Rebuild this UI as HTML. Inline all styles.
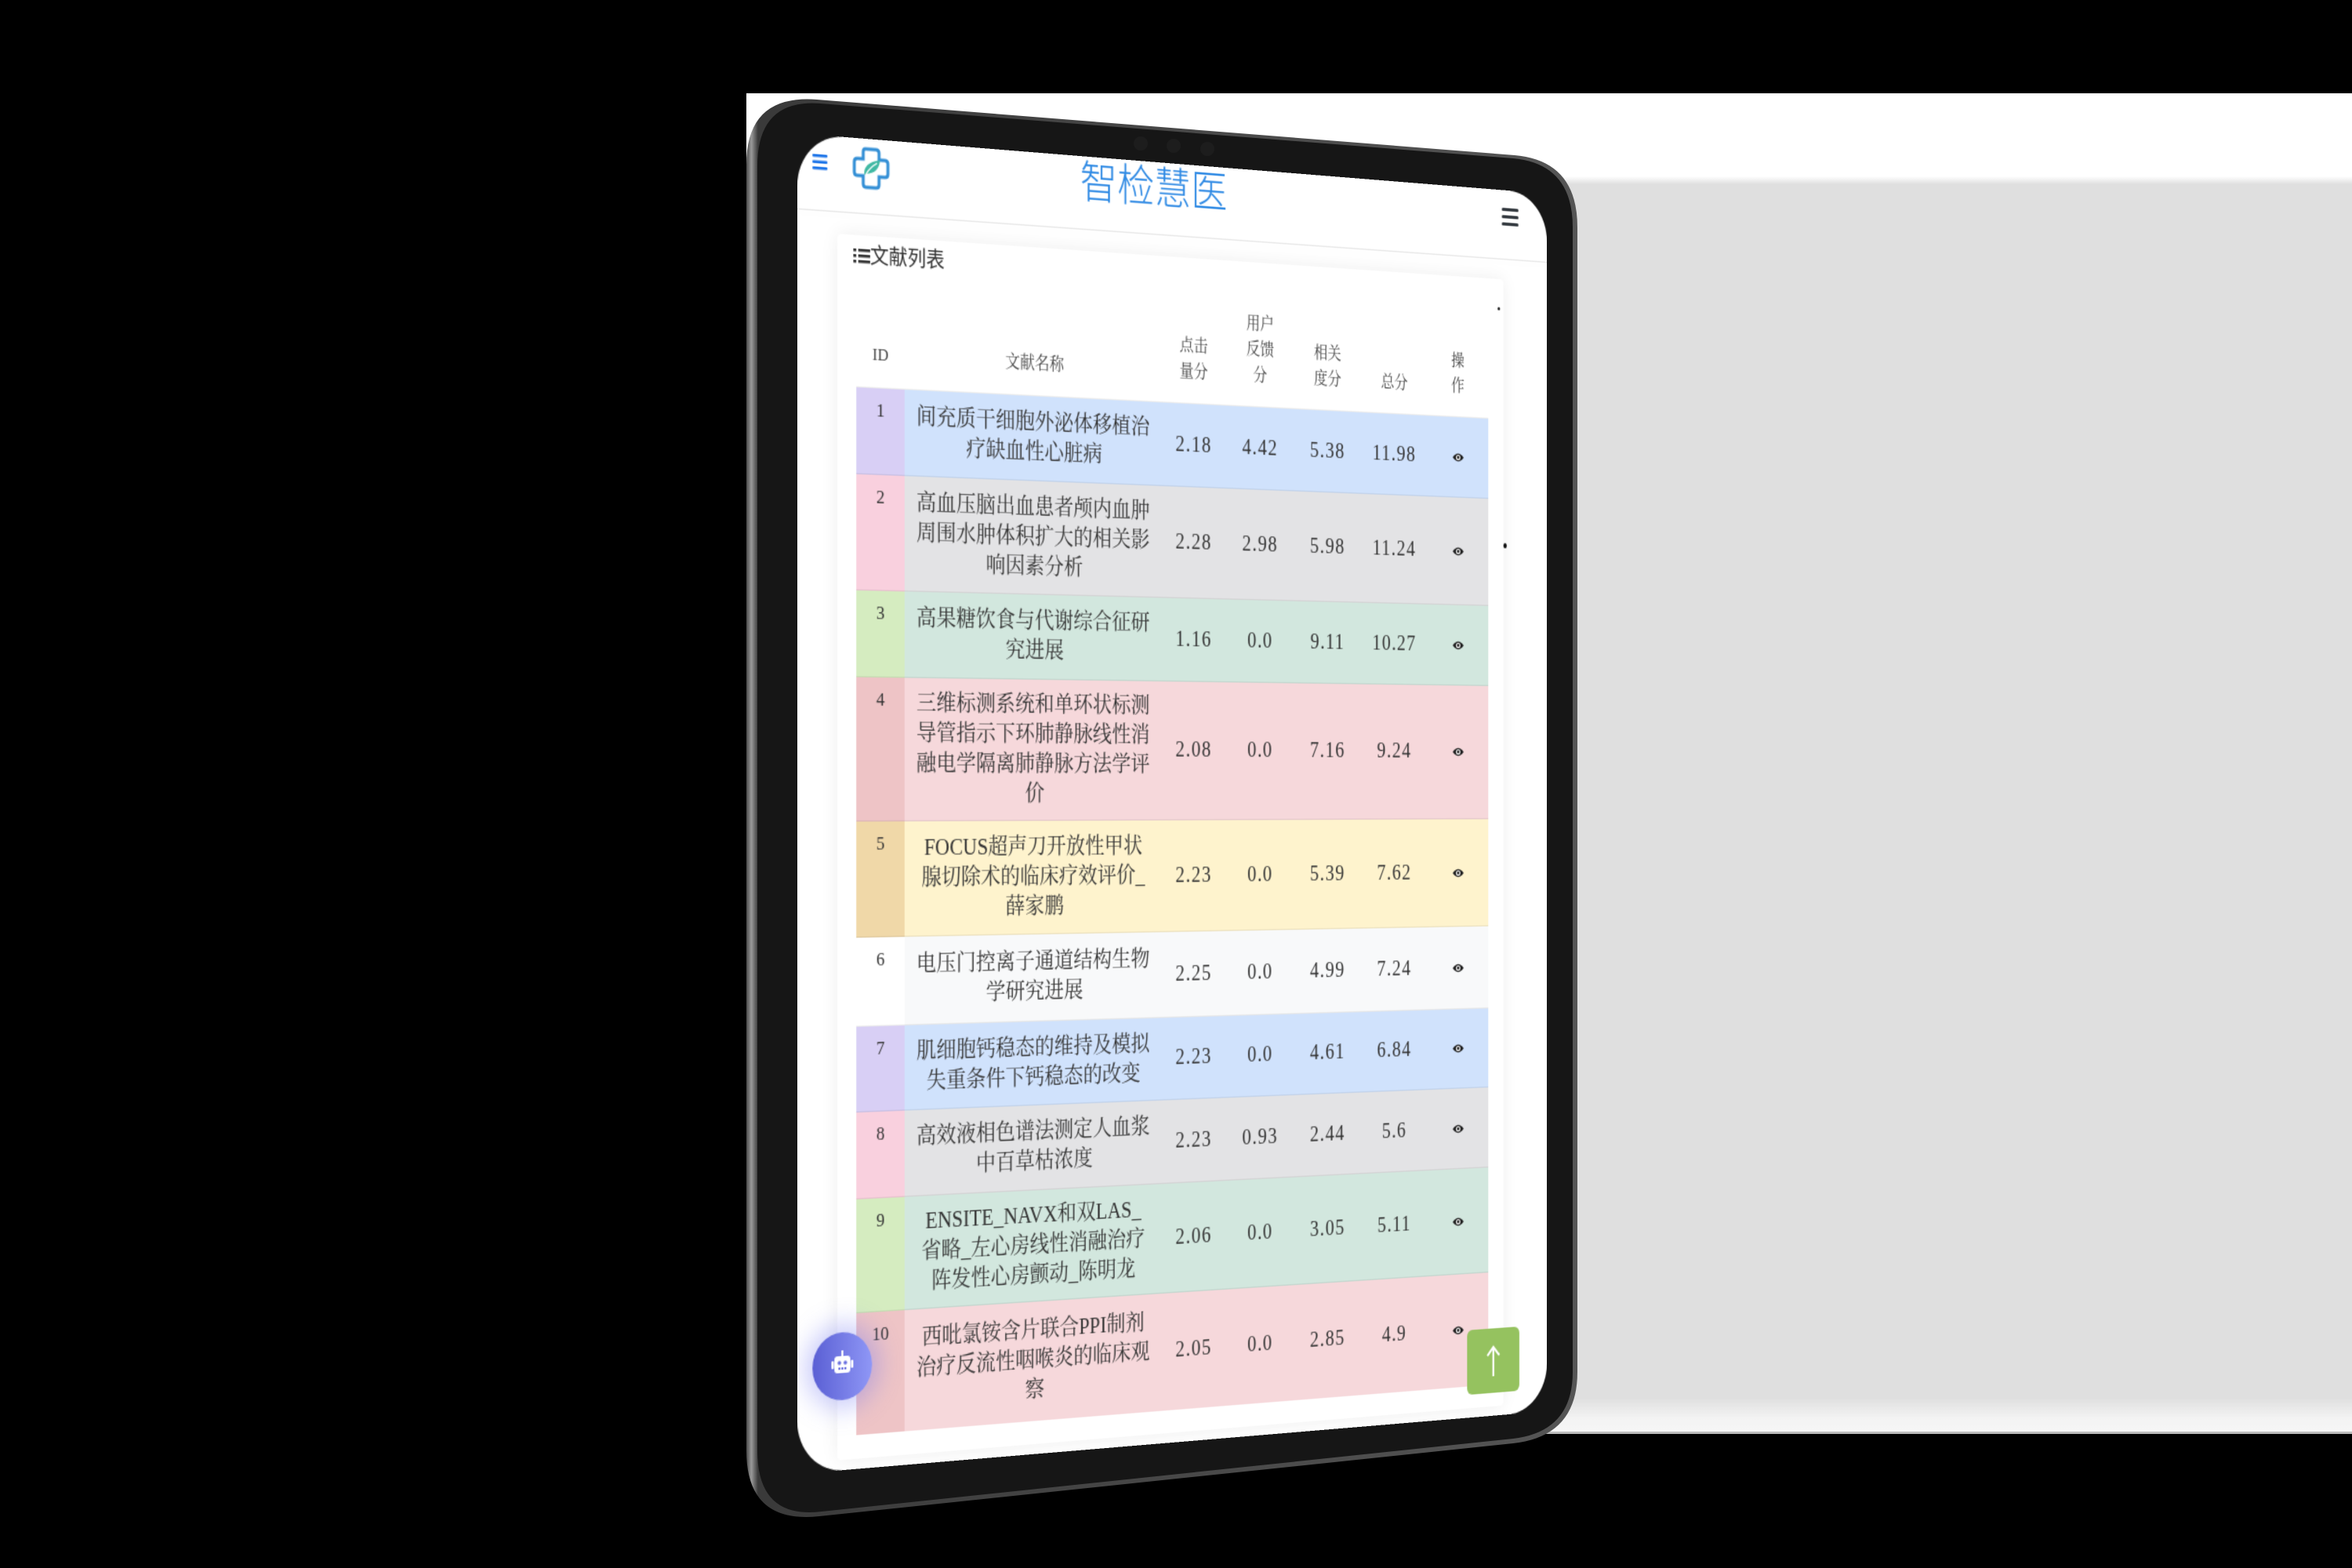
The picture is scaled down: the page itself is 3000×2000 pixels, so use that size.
<!DOCTYPE html>
<html><head><meta charset="utf-8">
<style>
html,body{margin:0;padding:0;}
body{width:3000px;height:2000px;background:#000;position:relative;overflow:hidden;font-family:"Liberation Serif","Noto Serif CJK SC",serif;}
#bgsvg{position:absolute;left:0;top:0;}
#screen{position:absolute;left:0;top:0;width:820px;height:1180px;background:#fff;border-radius:46px;overflow:hidden;
transform-origin:0 0;
transform:matrix3d(1.409095,0.124354,0,0.000123285, 0,1.449153,0,0, 0,0,1,0, 1017,170,0,1);}
.abs{position:absolute;}
#title{left:291px;top:-2px;width:160px;text-align:center;font-family:"Liberation Sans","Noto Sans CJK SC",sans-serif;font-size:40px;line-height:52px;color:#2f8ae4;font-weight:300;}
#sep{left:0;top:66px;width:820px;height:1px;background:#e6e6e6;box-shadow:0 2px 6px rgba(0,0,0,.05);}
#card{left:40px;top:86px;width:728px;height:1085px;background:#fff;box-shadow:0 0 18px rgba(0,0,0,.07);border-radius:4px;}
#lt{left:56px;top:92px;font-size:19px;color:#333;font-family:"Liberation Sans","Noto Sans CJK SC",sans-serif;line-height:26px;}
table{position:absolute;left:59px;top:128px;width:691px;border-collapse:collapse;table-layout:fixed;color:#333;}
th{font-weight:normal;font-size:15.5px;line-height:24px;color:#444;vertical-align:bottom;padding:0 2px 16px;text-align:center;height:76px;}
td{font-size:20px;line-height:25px;text-align:center;vertical-align:middle;padding:0 2px;border-top:1px solid rgba(0,0,0,.07);letter-spacing:1.2px;}
td.id{vertical-align:top;padding-top:10px;font-size:17px;line-height:20px;letter-spacing:0;}
td.nm{padding:0 4px;white-space:nowrap;font-size:20.5px;line-height:27px;letter-spacing:0;}
.eye{display:inline-block;width:15px;height:11px;}
.b td{background:#d0e2fc}.b td.id{background:#d8cff5}
.g td{background:#e3e3e5}.g td.id{background:#f9d0de}
.s td{background:#d2e7de}.s td.id{background:#d5ecc0}
.r td{background:#f6d8db}.r td.id{background:#eec4c6}
.y td{background:#fef3cd}.y td.id{background:#f0d8a8}
.l td{background:#f8f9fa}.l td.id{background:#fff}
#robot{left:15px;top:1058px;width:60px;height:60px;border-radius:50%;background:linear-gradient(90deg,#5a5fd4,#8f97f6);box-shadow:0 0 22px 8px rgba(110,115,240,.35);}
#up{left:725px;top:1096px;width:62px;height:62px;border-radius:6px;background:#95c25f;}
</style></head><body>
<svg id="bgsvg" width="3000" height="2000" viewBox="0 0 3000 2000">
<defs>
<linearGradient id="bgg" x1="0" y1="0" x2="0" y2="1">
<stop offset="0" stop-color="#ffffff"/><stop offset="0.062" stop-color="#ffffff"/><stop offset="0.068" stop-color="#dfdfdf"/>
<stop offset="0.975" stop-color="#dfdfdf"/><stop offset="0.99" stop-color="#f3f3f3"/><stop offset="1" stop-color="#f6f6f6"/>
</linearGradient>
<linearGradient id="metal" x1="0" y1="0" x2="1" y2="0">
<stop offset="0" stop-color="#4a4a4a"/><stop offset="0.006" stop-color="#9a9a9a"/><stop offset="0.014" stop-color="#3a3a3a"/><stop offset="1" stop-color="#555"/>
</linearGradient>
</defs>
<rect x="952" y="119" width="2048" height="1707" fill="url(#bgg)"/>
<rect x="952" y="1826" width="2048" height="3" fill="#bdbdbd"/>
<path d="M952,210 Q952,120 1042,127 L1932,198 Q2012,205 2012,290 L2012,1750 Q2012,1832 1930,1841 L1045,1934 Q952,1944 952,1850 Z" fill="url(#metal)"/>
<path d="M966,212 Q966,126 1046,132 L1930,202 Q2006,209 2006,290 L2006,1750 Q2006,1826 1930,1835 L1048,1928 Q966,1938 966,1850 Z" fill="#161616"/>
<circle cx="1455" cy="183" r="9" fill="#1d1d1d"/><circle cx="1497" cy="186" r="9" fill="#1d1d1d"/><circle cx="1540" cy="190" r="9" fill="#1d1d1d"/>
</svg>

<div id="screen">
  <svg class="abs" style="left:15px;top:17px" width="15" height="14" viewBox="0 0 15 14"><rect x="0" y="0" width="15" height="2.4" rx="1" fill="#1a73e8"/><rect x="0" y="5.5" width="15" height="2.4" rx="1" fill="#1a73e8"/><rect x="0" y="11" width="15" height="2.4" rx="1" fill="#1a73e8"/></svg>
  <svg class="abs" style="left:55px;top:6px" width="38" height="40" viewBox="0 0 38 40">
    <path d="M13,3 H24 Q27,3 27,6 V12 H33 Q36,12 36,15 V24 Q36,27 33,27 H27 V34 Q27,37 24,37 H14 Q11,37 11,34 V27 H5 Q2,27 2,24 V15 Q2,12 5,12 H11 V6 Q11,3 13,3 Z" fill="none" stroke="#3590d6" stroke-width="3"/>
    <path d="M12,26 Q11,15 28,12 Q27,24 14,25 Z" fill="#40b9a3"/>
    <path d="M14,25 Q18,19 25,15" stroke="#fff" stroke-width="1.2" fill="none"/>
  </svg>
  <div id="title" class="abs">智检慧医</div>
  <svg class="abs" style="left:766px;top:17px" width="20" height="18" viewBox="0 0 20 18"><rect x="0" y="0" width="20" height="3" rx="1.5" fill="#343a40"/><rect x="0" y="7" width="20" height="3" rx="1.5" fill="#343a40"/><rect x="0" y="14" width="20" height="3" rx="1.5" fill="#343a40"/></svg>
  <div id="sep" class="abs"></div>
  <div id="card" class="abs"></div>
  <div id="lt" class="abs"><svg width="17" height="14" viewBox="0 0 17 14" style="vertical-align:-1px"><rect x="0" y="1" width="3" height="2.5" fill="#333"/><rect x="5" y="1" width="12" height="2.5" fill="#333"/><rect x="0" y="6" width="3" height="2.5" fill="#333"/><rect x="5" y="6" width="12" height="2.5" fill="#333"/><rect x="0" y="11" width="3" height="2.5" fill="#333"/><rect x="5" y="11" width="12" height="2.5" fill="#333"/></svg>文献列表</div>
  <div class="abs" style="left:761px;top:113px;width:3px;height:3px;background:#222;border-radius:50%"></div>
  <div class="abs" style="left:768px;top:340px;width:4px;height:5px;background:#111;border-radius:50%"></div>

  <table>
    <colgroup><col style="width:49px"><col style="width:270px"><col style="width:72px"><col style="width:75px"><col style="width:77px"><col style="width:76px"><col style="width:72px"></colgroup>
    <thead><tr><th>ID</th><th>文献名称</th><th>点击<br>量分</th><th>用户<br>反馈<br>分</th><th>相关<br>度分</th><th>总分</th><th>操<br>作</th></tr></thead>
    <tbody>
      <tr class="b" style="height:77px"><td class="id">1</td><td class="nm">间充质干细胞外泌体移植治<br>疗缺血性心脏病</td><td>2.18</td><td>4.42</td><td>5.38</td><td>11.98</td><td><svg class="eye" viewBox="0 0 14 10"><path d="M1,5 Q7,-2 13,5 Q7,12 1,5 Z" fill="#222"/><circle cx="7" cy="5" r="2.4" fill="#fff"/><circle cx="7" cy="5" r="1.3" fill="#222"/></svg></td></tr>
      <tr class="g" style="height:103px"><td class="id">2</td><td class="nm">高血压脑出血患者颅内血肿<br>周围水肿体积扩大的相关影<br>响因素分析</td><td>2.28</td><td>2.98</td><td>5.98</td><td>11.24</td><td><svg class="eye" viewBox="0 0 14 10"><path d="M1,5 Q7,-2 13,5 Q7,12 1,5 Z" fill="#222"/><circle cx="7" cy="5" r="2.4" fill="#fff"/><circle cx="7" cy="5" r="1.3" fill="#222"/></svg></td></tr>
      <tr class="s" style="height:77px"><td class="id">3</td><td class="nm">高果糖饮食与代谢综合征研<br>究进展</td><td>1.16</td><td>0.0</td><td>9.11</td><td>10.27</td><td><svg class="eye" viewBox="0 0 14 10"><path d="M1,5 Q7,-2 13,5 Q7,12 1,5 Z" fill="#222"/><circle cx="7" cy="5" r="2.4" fill="#fff"/><circle cx="7" cy="5" r="1.3" fill="#222"/></svg></td></tr>
      <tr class="r" style="height:128px"><td class="id">4</td><td class="nm">三维标测系统和单环状标测<br>导管指示下环肺静脉线性消<br>融电学隔离肺静脉方法学评<br>价</td><td>2.08</td><td>0.0</td><td>7.16</td><td>9.24</td><td><svg class="eye" viewBox="0 0 14 10"><path d="M1,5 Q7,-2 13,5 Q7,12 1,5 Z" fill="#222"/><circle cx="7" cy="5" r="2.4" fill="#fff"/><circle cx="7" cy="5" r="1.3" fill="#222"/></svg></td></tr>
      <tr class="y" style="height:103px"><td class="id">5</td><td class="nm">FOCUS超声刀开放性甲状<br>腺切除术的临床疗效评价_<br>薛家鹏</td><td>2.23</td><td>0.0</td><td>5.39</td><td>7.62</td><td><svg class="eye" viewBox="0 0 14 10"><path d="M1,5 Q7,-2 13,5 Q7,12 1,5 Z" fill="#222"/><circle cx="7" cy="5" r="2.4" fill="#fff"/><circle cx="7" cy="5" r="1.3" fill="#222"/></svg></td></tr>
      <tr class="l" style="height:79px"><td class="id">6</td><td class="nm">电压门控离子通道结构生物<br>学研究进展</td><td>2.25</td><td>0.0</td><td>4.99</td><td>7.24</td><td><svg class="eye" viewBox="0 0 14 10"><path d="M1,5 Q7,-2 13,5 Q7,12 1,5 Z" fill="#222"/><circle cx="7" cy="5" r="2.4" fill="#fff"/><circle cx="7" cy="5" r="1.3" fill="#222"/></svg></td></tr>
      <tr class="b" style="height:76px"><td class="id">7</td><td class="nm">肌细胞钙稳态的维持及模拟<br>失重条件下钙稳态的改变</td><td>2.23</td><td>0.0</td><td>4.61</td><td>6.84</td><td><svg class="eye" viewBox="0 0 14 10"><path d="M1,5 Q7,-2 13,5 Q7,12 1,5 Z" fill="#222"/><circle cx="7" cy="5" r="2.4" fill="#fff"/><circle cx="7" cy="5" r="1.3" fill="#222"/></svg></td></tr>
      <tr class="g" style="height:77px"><td class="id">8</td><td class="nm">高效液相色谱法测定人血浆<br>中百草枯浓度</td><td>2.23</td><td>0.93</td><td>2.44</td><td>5.6</td><td><svg class="eye" viewBox="0 0 14 10"><path d="M1,5 Q7,-2 13,5 Q7,12 1,5 Z" fill="#222"/><circle cx="7" cy="5" r="2.4" fill="#fff"/><circle cx="7" cy="5" r="1.3" fill="#222"/></svg></td></tr>
      <tr class="s" style="height:101px"><td class="id">9</td><td class="nm">ENSITE_NAVX和双LAS_<br>省略_左心房线性消融治疗<br>阵发性心房颤动_陈明龙</td><td>2.06</td><td>0.0</td><td>3.05</td><td>5.11</td><td><svg class="eye" viewBox="0 0 14 10"><path d="M1,5 Q7,-2 13,5 Q7,12 1,5 Z" fill="#222"/><circle cx="7" cy="5" r="2.4" fill="#fff"/><circle cx="7" cy="5" r="1.3" fill="#222"/></svg></td></tr>
      <tr class="r" style="height:108px"><td class="id">10</td><td class="nm">西吡氯铵含片联合PPI制剂<br>治疗反流性咽喉炎的临床观<br>察</td><td>2.05</td><td>0.0</td><td>2.85</td><td>4.9</td><td><svg class="eye" viewBox="0 0 14 10"><path d="M1,5 Q7,-2 13,5 Q7,12 1,5 Z" fill="#222"/><circle cx="7" cy="5" r="2.4" fill="#fff"/><circle cx="7" cy="5" r="1.3" fill="#222"/></svg></td></tr>
    </tbody>
  </table>

  <div id="robot" class="abs">
    <svg style="position:absolute;left:18px;top:16px" width="24" height="26" viewBox="0 0 24 26">
      <rect x="11" y="0" width="2" height="5" fill="#fff"/>
      <rect x="4" y="5" width="16" height="15" rx="3" fill="#fff"/>
      <rect x="1" y="9" width="2.5" height="7" rx="1" fill="#fff"/><rect x="20.5" y="9" width="2.5" height="7" rx="1" fill="#fff"/>
      <circle cx="9" cy="11" r="1.8" fill="#6a70e0"/><circle cx="15" cy="11" r="1.8" fill="#6a70e0"/>
      <rect x="8" y="15" width="2" height="2" fill="#6a70e0"/><rect x="11" y="15" width="2" height="2" fill="#6a70e0"/><rect x="14" y="15" width="2" height="2" fill="#6a70e0"/>
    </svg>
  </div>
  <div id="up" class="abs">
    <svg style="position:absolute;left:22px;top:16px" width="18" height="32" viewBox="0 0 18 32"><path d="M9,30 V3 M2,10 L9,2 L16,10" stroke="#fff" stroke-width="2.2" fill="none"/></svg>
  </div>
</div>
</body></html>
